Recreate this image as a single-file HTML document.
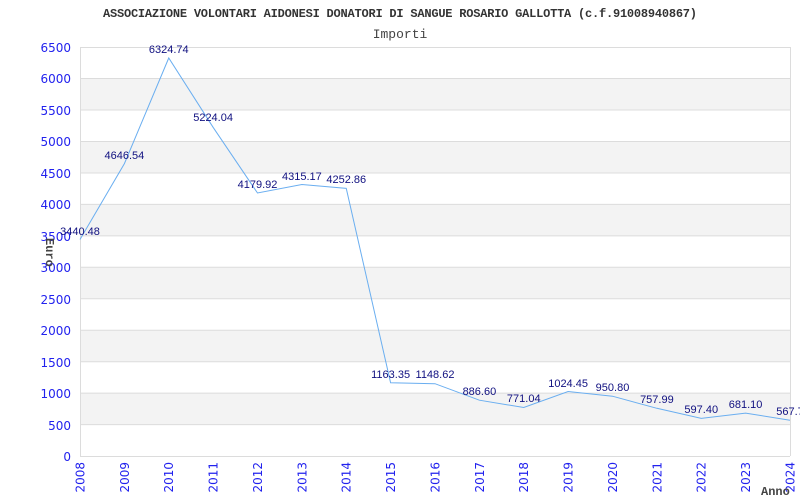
<!DOCTYPE html>
<html><head><meta charset="utf-8"><style>html,body{margin:0;padding:0;background:#fff}svg{display:block}</style></head>
<body>
<svg width="800" height="500" xmlns="http://www.w3.org/2000/svg">
<rect width="800" height="500" fill="#fff"/>
<g fill="#f3f3f3">
<rect x="80" y="78.5" width="710" height="31.5"/>
<rect x="80" y="141.5" width="710" height="31.5"/>
<rect x="80" y="204.4" width="710" height="31.5"/>
<rect x="80" y="267.3" width="710" height="31.5"/>
<rect x="80" y="330.2" width="710" height="31.5"/>
<rect x="80" y="393.1" width="710" height="31.5"/>
</g>
<g stroke="#dcdcdc" stroke-width="1">
<line x1="80" y1="47.5" x2="790" y2="47.5"/>
<line x1="80" y1="78.5" x2="790" y2="78.5"/>
<line x1="80" y1="110" x2="790" y2="110"/>
<line x1="80" y1="141.5" x2="790" y2="141.5"/>
<line x1="80" y1="173" x2="790" y2="173"/>
<line x1="80" y1="204.4" x2="790" y2="204.4"/>
<line x1="80" y1="235.9" x2="790" y2="235.9"/>
<line x1="80" y1="267.3" x2="790" y2="267.3"/>
<line x1="80" y1="298.8" x2="790" y2="298.8"/>
<line x1="80" y1="330.2" x2="790" y2="330.2"/>
<line x1="80" y1="361.7" x2="790" y2="361.7"/>
<line x1="80" y1="393.1" x2="790" y2="393.1"/>
<line x1="80" y1="424.6" x2="790" y2="424.6"/>
<line x1="80.5" y1="47" x2="80.5" y2="456"/>
<line x1="790.5" y1="47" x2="790.5" y2="456"/>
<line x1="80" y1="456.5" x2="790" y2="456.5"/>
</g>
<text x="400" y="17" text-anchor="middle" font-family="Liberation Mono, monospace" font-size="12" font-weight="bold" fill="#333" textLength="594">ASSOCIAZIONE VOLONTARI AIDONESI DONATORI DI SANGUE ROSARIO GALLOTTA (c.f.91008940867)</text>
<text x="400" y="38" text-anchor="middle" font-family="Liberation Mono, monospace" font-size="13" fill="#444">Importi</text>
<g font-family="DejaVu Sans, sans-serif" font-size="12" fill="#2222ee" text-anchor="end">
<text x="71" y="52">6500</text><text x="71" y="83">6000</text><text x="71" y="115">5500</text>
<text x="71" y="146">5000</text><text x="71" y="178">4500</text><text x="71" y="209">4000</text>
<text x="71" y="241">3500</text><text x="71" y="272">3000</text><text x="71" y="304">2500</text>
<text x="71" y="335">2000</text><text x="71" y="367">1500</text><text x="71" y="398">1000</text>
<text x="71" y="430">500</text><text x="71" y="461">0</text>
</g>
<g font-family="DejaVu Sans, sans-serif" font-size="12" fill="#2222ee" text-anchor="end">
<text transform="translate(84.5,462) rotate(-90)">2008</text>
<text transform="translate(128.9,462) rotate(-90)">2009</text>
<text transform="translate(173.2,462) rotate(-90)">2010</text>
<text transform="translate(217.6,462) rotate(-90)">2011</text>
<text transform="translate(262,462) rotate(-90)">2012</text>
<text transform="translate(306.4,462) rotate(-90)">2013</text>
<text transform="translate(350.7,462) rotate(-90)">2014</text>
<text transform="translate(395.1,462) rotate(-90)">2015</text>
<text transform="translate(439.5,462) rotate(-90)">2016</text>
<text transform="translate(483.9,462) rotate(-90)">2017</text>
<text transform="translate(528.2,462) rotate(-90)">2018</text>
<text transform="translate(572.6,462) rotate(-90)">2019</text>
<text transform="translate(617,462) rotate(-90)">2020</text>
<text transform="translate(661.4,462) rotate(-90)">2021</text>
<text transform="translate(705.7,462) rotate(-90)">2022</text>
<text transform="translate(750.1,462) rotate(-90)">2023</text>
<text transform="translate(794.5,462) rotate(-90)">2024</text>
</g>
<text transform="translate(46,238) rotate(90)" font-family="Liberation Mono, monospace" font-size="12" font-weight="bold" fill="#444">Euro</text>
<text x="761" y="495" font-family="Liberation Mono, monospace" font-size="12" font-weight="bold" fill="#444">Anno</text>
<polyline fill="none" stroke="#6aaef0" stroke-width="1" points="80,239.5 124.4,163.6 168.75,58 213.1,127.3 257.5,193 301.9,184.5 346.25,188.4 390.6,382.8 435,383.7 479.4,400.2 523.75,407.5 568.1,391.5 612.5,396.2 656.9,408.3 701.25,418.4 745.6,413.1 790,420.3"/>
<g font-family="Liberation Sans, sans-serif" font-size="11" fill="#101080" text-anchor="middle">
<text x="80" y="235">3440.48</text>
<text x="124.4" y="159">4646.54</text>
<text x="168.75" y="53">6324.74</text>
<text x="213.1" y="121">5224.04</text>
<text x="257.5" y="188">4179.92</text>
<text x="301.9" y="180">4315.17</text>
<text x="346.25" y="183">4252.86</text>
<text x="390.6" y="378">1163.35</text>
<text x="435" y="378">1148.62</text>
<text x="479.4" y="395">886.60</text>
<text x="523.75" y="402">771.04</text>
<text x="568.1" y="387">1024.45</text>
<text x="612.5" y="391">950.80</text>
<text x="656.9" y="403">757.99</text>
<text x="701.25" y="413">597.40</text>
<text x="745.6" y="408">681.10</text>
<text x="790" y="415">567.7</text>
</g>
</svg>
</body></html>
